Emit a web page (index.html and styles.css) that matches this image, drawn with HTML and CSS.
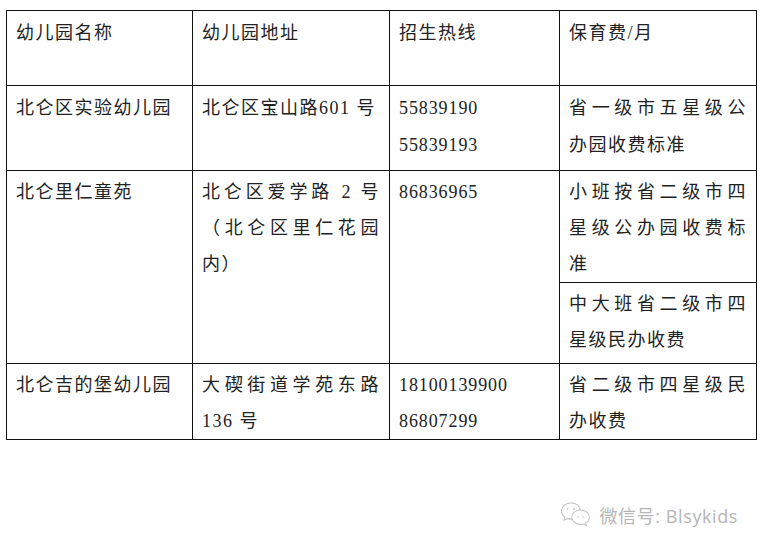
FILE: index.html
```html
<!DOCTYPE html>
<html lang="zh-CN">
<head>
<meta charset="utf-8">
<title>北仑区幼儿园</title>
<link rel="stylesheet" href="styles.css">
</head>
<body>
<div class="page">
  <table class="kg">
    <colgroup>
      <col class="c1"><col class="c2"><col class="c3"><col class="c4">
    </colgroup>
    <tr class="r-head">
      <th>幼儿园名称</th>
      <th>幼儿园地址</th>
      <th>招生热线</th>
      <th>保育费/月</th>
    </tr>
    <tr class="r1">
      <td>北仑区实验幼儿园</td>
      <td>北仑区宝山路601 号</td>
      <td class="tel">55839190<br>55839193</td>
      <td><span class="jl">省一级市五星级公</span>办园收费标准</td>
    </tr>
    <tr class="r2a">
      <td rowspan="2">北仑里仁童苑</td>
      <td rowspan="2"><span class="jl">北仑区爱学路 2 号</span><span class="jl">（北仑区里仁花园</span>内）</td>
      <td rowspan="2" class="tel">86836965</td>
      <td><span class="jl">小班按省二级市四</span><span class="jl">星级公办园收费标</span>准</td>
    </tr>
    <tr class="r2b">
      <td><span class="jl">中大班省二级市四</span>星级民办收费</td>
    </tr>
    <tr class="r3">
      <td>北仑吉的堡幼儿园</td>
      <td><span class="jl">大碶街道学苑东路</span>136 号</td>
      <td class="tel">18100139900<br>86807299</td>
      <td><span class="jl">省二级市四星级民</span>办收费</td>
    </tr>
  </table>

  <div class="mark">
    <svg class="wx" width="32" height="30" viewBox="0 0 32 30" aria-hidden="true">
      <path d="M11 3 C5.5 3 1.5 6.6 1.5 11 C1.5 13.6 2.9 15.8 5 17.3 L4.2 20.2 L7.6 18.6 C8.7 18.9 9.8 19.1 11 19.1 C16.5 19.1 20.5 15.5 20.5 11 C20.5 6.6 16.5 3 11 3 Z" fill="none" stroke="#c4c4c4" stroke-width="1.1"/>
      <path d="M20.5 10 C15.5 10 11.8 13.3 11.8 17.2 C11.8 21.1 15.5 24.4 20.5 24.4 C21.5 24.4 22.4 24.3 23.3 24 L26.4 25.6 L25.7 22.9 C27.9 21.6 29.3 19.5 29.3 17.2 C29.3 13.3 25.5 10 20.5 10 Z" fill="#fff" stroke="#c4c4c4" stroke-width="1.1"/>
      <path d="M16.8 17.2 Q17.8 16 18.8 17.2 M22.2 17.2 Q23.2 16 24.2 17.2" fill="none" stroke="#c4c4c4" stroke-width="1"/>
      <circle cx="7.5" cy="9" r="0.9" fill="#c4c4c4"/>
      <circle cx="14" cy="9" r="0.9" fill="#c4c4c4"/>
    </svg>
    <span class="wx-text">微信号: Blsykids</span>
  </div>
</div>
</body>
</html>
```

FILE: styles.css
```css
html, body {
  margin: 0;
  padding: 0;
  background: #ffffff;
}

.page {
  width: 763px;
  padding: 10px 0 0 6px;
  box-sizing: border-box;
}

.kg {
  border-collapse: collapse;
  table-layout: fixed;
  width: 750px;
  font-family: "Liberation Serif", "Noto Sans CJK SC", serif;
  font-size: 18px;
  letter-spacing: 1.5px;
  line-height: 36px;
  color: #222222;
}

.c1 { width: 186px; }
.c2 { width: 197px; }
.c3 { width: 170px; }
.c4 { width: 197px; }

.kg th,
.kg td {
  border: 1px solid #111111;
  padding: 4px 9px 0 9px;
  vertical-align: top;
  text-align: left;
  font-weight: normal;
}

.tel {
  letter-spacing: 0.9px;
}

.r-head { height: 75px; }
.r1 { height: 85px; }
.r2a { height: 111px; }
.r2b { height: 81px; }
.r3 { height: 75px; }

.r1 td {
  line-height: 37px;
}

.r2a td,
.r2b td,
.r3 td {
  padding-top: 3px;
}

.jl {
  display: block;
  text-align: justify;
  text-align-last: justify;
}

.mark {
  display: flex;
  align-items: center;
  justify-content: flex-end;
  gap: 7px;
  padding-right: 25px;
  margin-top: 60px;
}

.wx {
  display: block;
}

.wx-text {
  font-family: "Open Sans", "Noto Sans CJK SC", sans-serif;
  font-size: 18px;
  letter-spacing: 0.6px;
  color: #b6b6b6;
}
```
